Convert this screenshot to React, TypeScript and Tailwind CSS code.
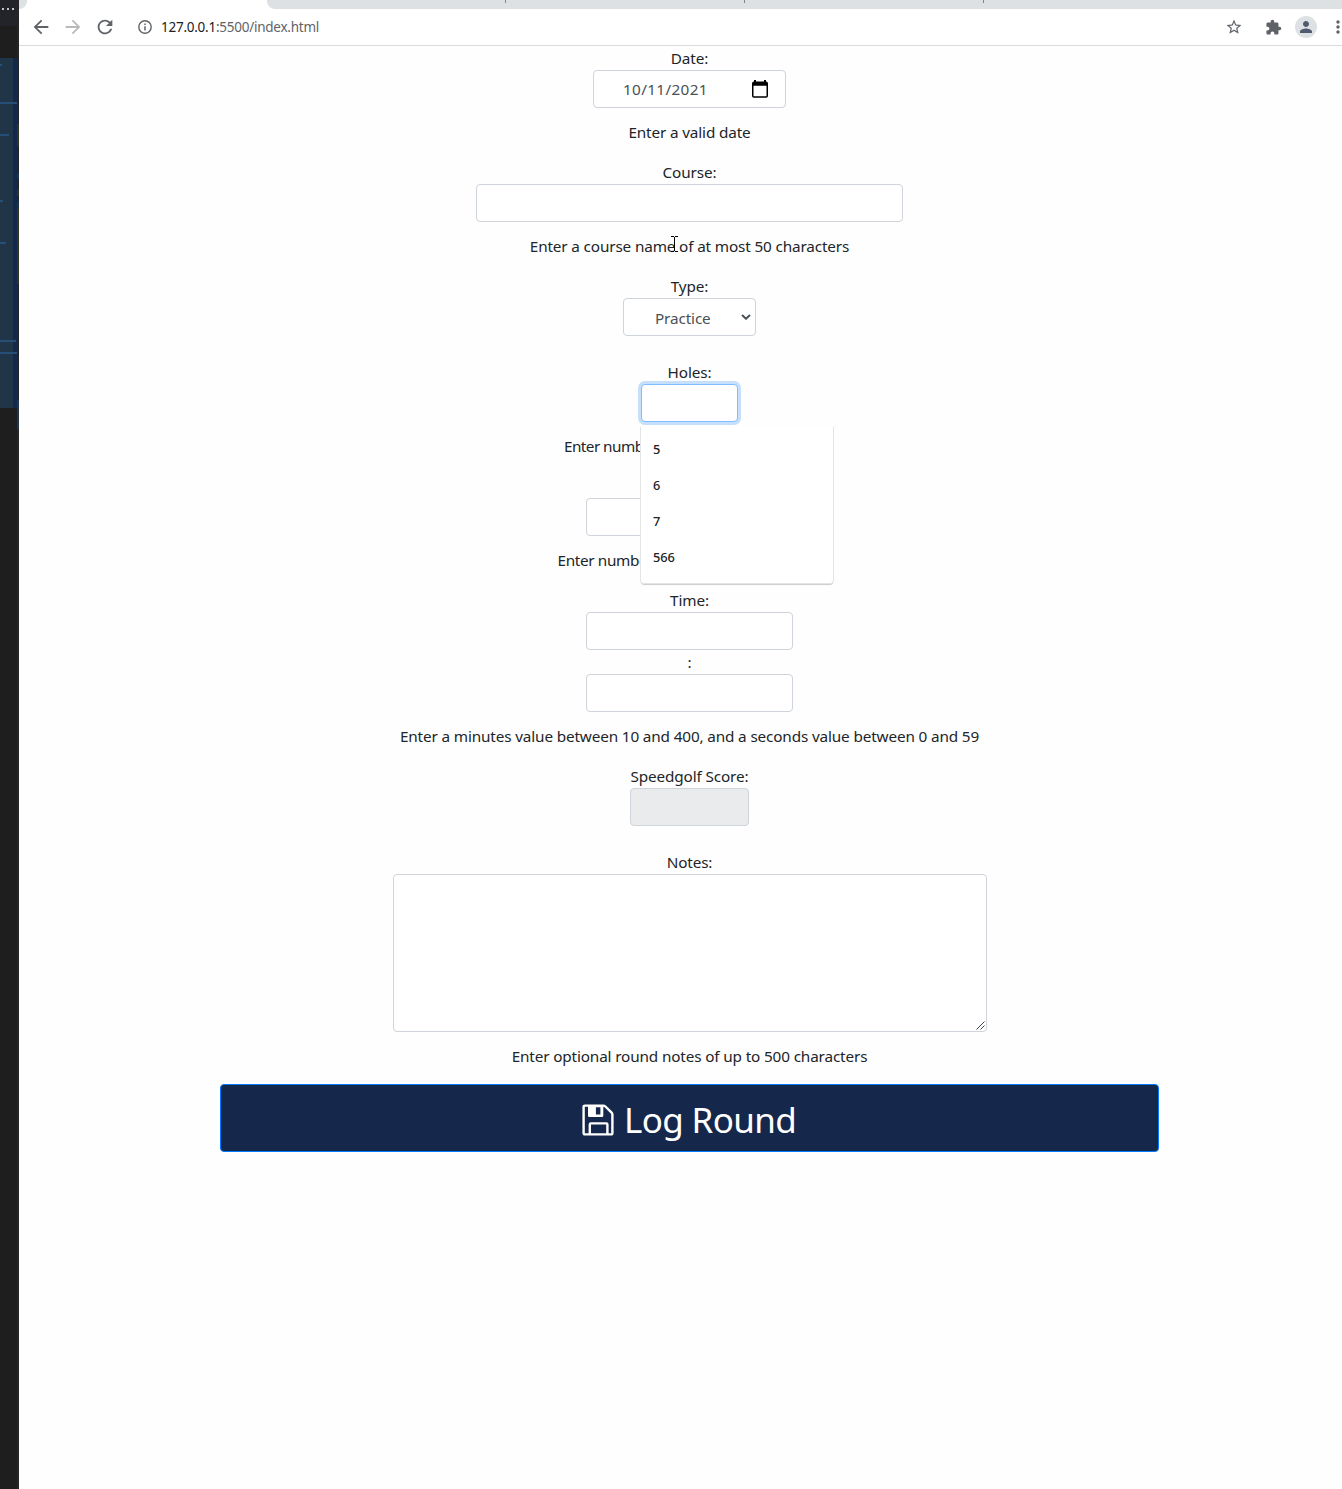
import React from 'react';
import {
  MdArrowBack,
  MdArrowForward,
  MdRefresh,
  MdStarBorder,
  MdExtension,
  MdPerson,
  MdMoreVert,
} from 'react-icons/md';

const field = 'h-[38px] shrink-0 rounded-[4px] border border-[#ced4da] bg-white';

function Label({ children }: { children: React.ReactNode }) {
  return <label className="block h-6 leading-6 tracking-[-0.13px]">{children}</label>;
}

function Hint({ children, spacing = 'tracking-[-0.145px]' }: { children: React.ReactNode; spacing?: string }) {
  return <div className={`mt-3 mb-4 h-6 whitespace-nowrap leading-6 ${spacing}`}>{children}</div>;
}

const codeLines = [
  { top: 'top-[6px]', width: 'w-[2px]' },
  { top: 'top-[44px]', width: 'w-[17px]' },
  { top: 'top-[76px]', width: 'w-[9px]' },
  { top: 'top-[142px]', width: 'w-[3px]' },
  { top: 'top-[184px]', width: 'w-[6px]' },
  { top: 'top-[282px]', width: 'w-4' },
  { top: 'top-[294px]', width: 'w-[17px]' },
];

function EditorEdge() {
  return (
    <aside className="flex w-[19px] shrink-0">
      <div className="flex w-[17px] flex-col bg-[#1e1e1e]">
        <div className="flex h-[26px] gap-[3px] bg-[#232429] pl-[2px] pt-2">
          <i className="h-[2px] w-[2px] bg-[#c5c5c5]" />
          <i className="h-[2px] w-[2px] bg-[#c5c5c5]" />
          <i className="h-[2px] w-[2px] bg-[#c5c5c5]" />
        </div>
        <div className="h-8 bg-[#1e1e1e]" />
        <div className="relative flex h-[350px] justify-end bg-[#203547]">
          <div className="w-1 bg-[#12294f]" />
          {codeLines.map((l) => (
            <i key={l.top} className={`absolute left-0 h-[2px] bg-[#264f78] ${l.top} ${l.width}`} />
          ))}
        </div>
      </div>
      <div className="flex w-[2px] flex-col bg-[#252526]">
        <div className="h-[124px]" />
        <div className="h-[22px] bg-[#33331f]" />
        <div className="h-[27px]" />
        <div className="h-[6px] bg-[#1c3340]" />
        <div className="h-[11px]" />
        <div className="h-[6px] bg-[#33331f]" />
        <div className="h-[5px]" />
        <div className="h-[7px] bg-[#1c3340]" />
        <div className="h-[76px] bg-[#33331f]" />
        <div className="h-[116px]" />
        <div className="h-[30px] bg-[#203547]" />
      </div>
    </aside>
  );
}

function TabStrip() {
  return (
    <div className="flex h-[9px] bg-white">
      <div className="h-[9px] w-2 rounded-br-[8px] bg-[#dde1e3]" />
      <div className="ml-60 flex flex-1 rounded-bl-[8px] bg-[#dde1e3] pl-[238px]">
        <i className="h-[3px] w-px bg-[#80868b]" />
        <i className="ml-[238px] h-[3px] w-px bg-[#80868b]" />
        <i className="ml-[238px] h-[3px] w-px bg-[#80868b]" />
      </div>
    </div>
  );
}

function Toolbar() {
  return (
    <div className="flex h-[37px] items-center border-b border-[#d9dadd] bg-white pl-[11px] text-[#5f6368]">
      <MdArrowBack size={22} className="shrink-0" />
      <MdArrowForward size={22} className="ml-[10px] shrink-0 text-[#bababc]" />
      <MdRefresh size={22} className="ml-[10px] shrink-0" />
      <svg width="14" height="14" viewBox="0 0 14 14" className="ml-[22px] shrink-0" fill="none" stroke="currentColor">
        <circle cx="7" cy="7" r="6.2" strokeWidth="1.4" />
        <path d="M7 6.2V10.4M7 3.5V5" strokeWidth="1.5" />
      </svg>
      <div className="ml-[9px] mt-px w-[1064px] shrink-0 whitespace-nowrap text-[13.5px] tracking-[-0.25px]">
        <span className="text-[#202124]">127.0.0.1</span>:5500/index.html
      </div>
      <MdStarBorder size={18} className="shrink-0" />
      <MdExtension size={17} className="ml-[22px] shrink-0" />
      <div className="ml-[13px] flex h-[22px] w-[22px] shrink-0 items-center justify-center rounded-full bg-[#dde1e3] text-[#505b70]">
        <MdPerson size={18} />
      </div>
      <MdMoreVert size={20} className="ml-[11px] shrink-0" />
    </div>
  );
}

function CalendarIcon() {
  return (
    <svg width="18" height="20" viewBox="0 0 18 20" className="-mt-px">
      <path
        fillRule="evenodd"
        d="M3 1H5V2.6H13V1H15V2.6Q17 2.6 17 4.5V17Q17 18.8 15.2 18.8H2.8Q1 18.8 1 17V4.5Q1 2.6 3 2.6ZM2.5 6.8V17.3H15.5V6.8Z"
        fill="#000"
      />
    </svg>
  );
}

function FloppyIcon() {
  return (
    <svg width="32" height="32" viewBox="0 0 32 32" fill="none" stroke="#fff" strokeWidth="2.4">
      <path d="M3 1.6H21.3Q22.5 1.6 23.4 2.5L29.6 8.7Q30.4 9.5 30.4 10.8V29Q30.4 30.4 29 30.4H3Q1.6 30.4 1.6 29V3Q1.6 1.6 3 1.6Z" />
      <path d="M7.8 30V20.4Q7.8 19.4 8.8 19.4H24.4Q25.4 19.4 25.4 20.4V30" />
      <path fillRule="evenodd" stroke="none" fill="#fff" d="M6 1H21.3V11.7Q21.3 13 20 13H7.3Q6 13 6 11.7ZM13.9 3.2V10.6H18.4V3.2Z" />
    </svg>
  );
}

function Suggestions() {
  return (
    <ul className="absolute -left-px top-[43px] z-10 h-[157px] w-[194px] rounded-b-[4px] border-x border-b border-[#e3e4e6] bg-white pt-[5px] text-left text-[12.8px] tracking-[-0.1px] text-[#202124] shadow-[0_2px_1px_-1px_rgba(0,0,0,0.2)]">
      {['5', '6', '7', '566'].map((v) => (
        <li key={v} className="flex h-9 items-center pl-3 font-medium">
          {v}
        </li>
      ))}
    </ul>
  );
}

function RoundForm() {
  return (
    <form className="ml-[201px] flex w-[939px] flex-col items-center text-center text-[15.3px] text-[#212529]">
      <Label>Date:</Label>
      <div className={`${field} flex w-[193px] items-center justify-between pl-[29px] pr-4 text-[#495057]`}>
        <span className="tracking-[0.35px]">10/11/2021</span>
        <CalendarIcon />
      </div>
      <Hint>Enter a valid date</Hint>

      <Label>Course:</Label>
      <div className={`${field} w-[427px]`} />
      <div className="relative">
        <Hint>Enter a course name of at most 50 characters</Hint>
        <svg className="absolute left-[141px] top-[14px]" width="7" height="16" viewBox="0 0 7 16" fill="none" stroke="#000">
          <path d="M0 .5H3M4 .5H7M3.5 1V15M0 15.5H3M4 15.5H7" />
        </svg>
      </div>

      <Label>Type:</Label>
      <div className={`${field} mb-6 flex w-[133px] items-center justify-between pl-[31px] pr-1 text-[#495057]`}>
        <span className="mt-[3px] tracking-[-0.13px]">Practice</span>
        <svg width="10" height="6" viewBox="0 0 10 6" fill="none" stroke="#495057" strokeWidth="2">
          <path d="M1 .9L5 4.7L9 .9" />
        </svg>
      </div>

      <Label>Holes:</Label>
      <div className="relative">
        <div className="h-[38px] w-[97px] rounded-[4px] border border-[#80bdff] bg-white shadow-[0_0_0_3px_#c6dffd]" />
        <Suggestions />
      </div>
      <div className="w-[251px] text-left">
        <Hint spacing="tracking-[-0.55px]">Enter numb</Hint>
      </div>

      <div className="h-6" />
      <div className={`${field} w-[207px]`} />
      <div className="w-[264px] text-left">
        <Hint spacing="tracking-[-0.35px]">Enter numbe</Hint>
      </div>

      <Label>Time:</Label>
      <div className={`${field} w-[207px]`} />
      <div className="h-6 leading-6">:</div>
      <div className={`${field} w-[207px]`} />
      <Hint>Enter a minutes value between 10 and 400, and a seconds value between 0 and 59</Hint>

      <Label>Speedgolf Score:</Label>
      <div className="mb-6 h-[38px] w-[119px] rounded-[4px] border border-[#ced4da] bg-[#e9ebec]" />

      <Label>Notes:</Label>
      <div className="flex h-[158px] w-[594px] items-end justify-end rounded-[4px] border border-[#ced4da] bg-white">
        <svg width="10" height="10" viewBox="0 0 10 10" stroke="#444" fill="none">
          <path d="M.5 8.5L8.5 .5M4.5 8.5L8.5 4.5" />
        </svg>
      </div>
      <Hint>Enter optional round notes of up to 500 characters</Hint>

      <button
        type="button"
        className="flex h-[68px] w-full items-center justify-center rounded-[4px] border border-[#007bff] bg-[#15284b] pr-px text-white"
      >
        <span className="mt-1 flex">
          <FloppyIcon />
        </span>
        <span className="ml-[10px] mt-1 whitespace-nowrap text-[35px] leading-[54px] tracking-[-0.65px]">Log Round</span>
      </button>
    </form>
  );
}

export default function App() {
  return (
    <div className="flex h-[1489px] w-full overflow-hidden bg-[#fefefe] font-['Noto_Sans','Open_Sans',sans-serif]">
      <EditorEdge />
      <main className="min-w-0 flex-1">
        <TabStrip />
        <Toolbar />
        <RoundForm />
      </main>
    </div>
  );
}
